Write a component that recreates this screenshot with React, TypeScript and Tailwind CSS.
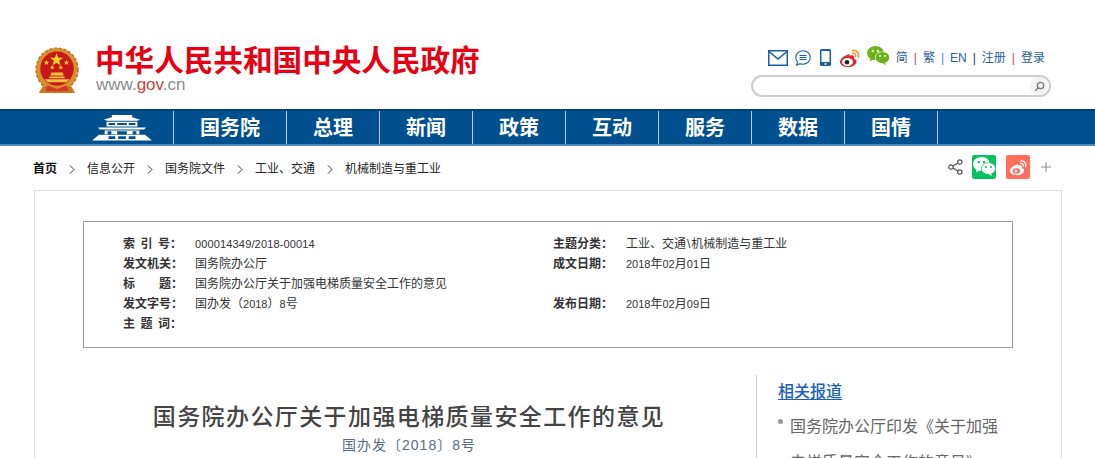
const cjk = { sans: "font-['Liberation_Sans','Noto_Sans_CJK_SC',sans-serif]" };

const navItems = [
  { label: '国务院', w: 'w-[113px]' },
  { label: '总理', w: 'w-[93px]' },
  { label: '新闻', w: 'w-[93px]' },
  { label: '政策', w: 'w-[93px]' },
  { label: '互动', w: 'w-[93px]' },
  { label: '服务', w: 'w-[93px]' },
  { label: '数据', w: 'w-[93px]' },
  { label: '国情', w: 'w-[93px]' },
];

const crumbs = ['信息公开', '国务院文件', '工业、交通', '机械制造与重工业'];

function Emblem() {
  return (
    <svg width="44" height="47" viewBox="0 0 46 48" preserveAspectRatio="none" className="shrink-0">
      <path d="M8 40 L4 47 H42 L38 40 Z" fill="#c9791c" />
      <circle cx="23" cy="23" r="22" fill="#d9912a" />
      <circle cx="23" cy="23" r="22" fill="none" stroke="#b5601a" strokeWidth="1.2" strokeDasharray="3 2" />
      <circle cx="23" cy="22" r="17.500" fill="#c8161d" />
      <polygon points="22.5,6 24.2,11 29.5,11 25.2,14 26.8,19 22.5,16 18.2,19 19.8,14 15.5,11 20.8,11" fill="#f7d51d" />
      <polygon points="12,13 12.8,15 15,15 13.2,16.4 13.9,18.5 12,17.2 10.1,18.5 10.8,16.4 9,15 11.2,15" fill="#f7d51d" />
      <polygon points="33,13 33.8,15 36,15 34.2,16.4 34.9,18.5 33,17.2 31.1,18.5 31.8,16.4 30,15 32.2,15" fill="#f7d51d" />
      <polygon points="18,18.5 18.7,20.2 20.5,20.2 19,21.4 19.6,23 18,22 16.4,23 17,21.4 15.5,20.2 17.3,20.2" fill="#f7d51d" />
      <polygon points="27,18.5 27.7,20.2 29.5,20.2 28,21.4 28.6,23 27,22 25.4,23 26,21.4 24.5,20.2 26.3,20.2" fill="#f7d51d" />
      <path d="M17 26 H29 L30 29 H16 Z M15 30 H31 V32 H15 Z" fill="#f5c63a" />
      <path d="M10 33 H36 L33 36 H13 Z" fill="#f0c040" />
      <path d="M13 39 L23 43 L33 39 L35 45 H11 Z" fill="#d5382a" />
    </svg>
  );
}

function Building() {
  return (
    <svg width="62" height="26" viewBox="0 0 62 27" fill="#fff" className="shrink-0">
      <path d="M20 0 H42 L41 2 L50 5 L46 6 H16 L12 5 L21 2 Z" />
      <path d="M15 7 H47 V12 H15 Z M17 8.2 V10.5 H24 V8.2 Z M26 8.2 V10.5 H36 V8.2 Z M38 8.2 V10.5 H45 V8.2 Z" fillRule="evenodd" />
      <path d="M6 13 H56 L54 15 H8 Z" />
      <path d="M13 16 H49 V20 H13 Z M16 17 V20 H20 V17 Z M26 17 V20 H36 V17 Z M42 17 V20 H46 V17 Z" fillRule="evenodd" />
      <path d="M7 20.5 H55 L62 26.5 H0 Z" />
      <path d="M17 22 H24 V25 H17 Z M27 22 H35 V25 H27 Z M38 22 H45 V25 H38 Z" fill="#00508f" />
    </svg>
  );
}

function WeiboColor() {
  return (
    <svg width="22" height="20" viewBox="0 0 22 20" className="shrink-0">
      <path d="M9 6.5 C3.500 8.500 .5 12 1 14.500 C1.800 18 6.500 19.500 10.500 19 C15 18.500 18 15.500 17.500 13 C17.200 11.500 15.500 11.300 15 10.800 C15.800 8.500 14.800 7.300 13.200 7.300 C12 7.300 10.500 8 10.500 8 C10.800 6 10.200 5.800 9 6.500 Z" fill="#e0272d" />
      <ellipse cx="8.500" cy="14" rx="5.500" ry="4" fill="#fff" />
      <circle cx="8" cy="14.200" r="2.300" fill="#222" />
      <path d="M13.500 2.500 C17.500 1.500 20.500 5 19.300 9" fill="none" stroke="#f59a23" strokeWidth="1.800" strokeLinecap="round" />
      <path d="M13.800 5.300 C15.800 4.900 17.200 6.500 16.600 8.300" fill="none" stroke="#f59a23" strokeWidth="1.500" strokeLinecap="round" />
    </svg>
  );
}

function WechatBubbles({ back, front, eye }: { back: string; front: string; eye: string }) {
  return (
    <svg width="23" height="20" viewBox="0 0 23 20" className="shrink-0">
      <ellipse cx="8.500" cy="7" rx="8.500" ry="7" fill={back} />
      <path d="M3.500 11 L3 15.500 L8 12.500 Z" fill={back} />
      <circle cx="5.800" cy="5" r="1.200" fill={eye} />
      <circle cx="11" cy="5" r="1.200" fill={eye} />
      <ellipse cx="15.500" cy="11.500" rx="7.500" ry="6" fill={eye} />
      <ellipse cx="15.500" cy="11.500" rx="6.800" ry="5.500" fill={front} />
      <path d="M17.500 15.500 L19 19.500 L14.500 16 Z" fill={front} />
      <circle cx="13" cy="10" r="1" fill={eye} />
      <circle cx="18" cy="10" r="1" fill={eye} />
    </svg>
  );
}

function TopLinks() {
  return (
    <div className="flex items-center text-[12px] leading-[16px] text-[#2a5c94]">
      <span>简</span>
      <span className="mx-[6px] text-[#b04a4a]">|</span>
      <span>繁</span>
      <span className="mx-[6px] text-[#3d8fc8]">|</span>
      <span>EN</span>
      <span className="mx-[6px] text-[#1b3a7a]">|</span>
      <span>注册</span>
      <span className="mx-[6px] text-[#b04a4a]">|</span>
      <span>登录</span>
    </div>
  );
}

function Header() {
  return (
    <header className="flex h-[109px] justify-between pl-[35px] pr-[44px]">
      <div className="flex pt-[47px]">
        <Emblem />
        <div className="ml-[16px] -mt-[4px]">
          <div className="text-[29.6px] font-bold leading-[36px] text-[#e60012]">中华人民共和国中央人民政府</div>
          <div className="-mt-[3px] pl-[1px] text-[17px] leading-[18px] text-[#8c8c8c]">
            www.<span className="text-[#c8453a]">gov</span>.cn
          </div>
        </div>
      </div>
      <div className="flex w-[300px] flex-col items-end pt-[48px]">
        <div className="mr-[6px] flex h-[19px] items-center justify-end">
          <svg width="20" height="16" viewBox="0 0 20 16" fill="none" stroke="#19609f" strokeWidth="1.500" className="shrink-0">
            <rect x=".75" y=".75" width="18.500" height="14.500" />
            <path d="M1 1.500 L10 9 L19 1.500" />
          </svg>
          <svg width="16" height="16" viewBox="0 0 16 16" fill="none" stroke="#19609f" strokeWidth="1.100" className="ml-[7px] shrink-0">
            <path d="M8 .8 C12 .8 15.200 3.600 15.200 7.500 C15.200 11.300 12 14.200 8 14.200 C7 14.200 6 14 5 13.700 L1.500 15 L2.500 12 C1.300 10.800 .8 9.200 .8 7.500 C.8 3.600 4 .8 8 .8 Z" />
            <path d="M4.500 5.500 H11.500 M4.500 7.500 H11.500 M4.500 9.500 H11.500" />
          </svg>
          <svg width="11" height="17" viewBox="0 0 11 17" className="ml-[9px] shrink-0">
            <rect x="0" y="0" width="11" height="17" rx="1.500" fill="#19609f" />
            <rect x="1.500" y="2" width="8" height="11" fill="#fff" />
            <circle cx="5.500" cy="15" r="1" fill="#fff" />
          </svg>
          <span className="ml-[8px]"><WeiboColor /></span>
          <span className="ml-[6px] -mt-[3px]"><WechatBubbles back="#6cb319" front="#6cb319" eye="#fff" /></span>
          <span className="ml-[6px]"><TopLinks /></span>
        </div>
        <div className="mt-[8px] flex h-[22px] w-[300px] items-center justify-end rounded-full border-2 border-[#cccccc] bg-white pr-[1px]">
          <div className="flex h-[18px] w-[18px] items-center justify-center rounded-full bg-[#f2f2f2]">
            <svg width="11" height="11" viewBox="0 0 11 11" fill="none" stroke="#777" strokeWidth="1.300">
              <circle cx="6.500" cy="4.500" r="3.200" />
              <path d="M4.200 6.800 L1.200 9.800" />
            </svg>
          </div>
        </div>
      </div>
    </header>
  );
}

function Nav() {
  return (
    <nav className="flex h-[37px] border-t-2 border-b-2 border-t-[#003f75] border-b-[#4f87b7] bg-[#00508f] pl-[91px]">
      <div className="flex w-[82px] items-center"><Building /></div>
      <div className="flex border-r border-[#b9cbdc]">
        {navItems.map(item => (
          <a
            key={item.label}
            className={`${item.w} flex items-center justify-center border-l border-[#b9cbdc] text-[20px] font-bold text-white`}
          >
            {item.label}
          </a>
        ))}
      </div>
    </nav>
  );
}

function Chevron() {
  return (
    <svg width="6" height="9" viewBox="0 0 6 9" fill="none" stroke="#333" strokeWidth="1" className="mx-[12px] shrink-0">
      <path d="M1 .5 L5 4.500 L1 8.500" />
    </svg>
  );
}

function Breadcrumb() {
  return (
    <div className="flex h-[44px] items-center justify-between pl-[33px] pr-[44px]">
      <div className="mt-[2px] flex items-center text-[12px] text-[#222]">
        <a className="font-bold text-[#111]">首页</a>
        {crumbs.map(c => (
          <span key={c} className="flex items-center">
            <Chevron />
            <a>{c}</a>
          </span>
        ))}
      </div>
      <div className="-mt-[2px] flex items-center">
        <svg width="15" height="16" viewBox="0 0 15 16" fill="none" stroke="#555" strokeWidth="1.200" className="shrink-0">
          <circle cx="11.800" cy="3" r="2.200" />
          <circle cx="3" cy="8" r="2.200" />
          <circle cx="11.800" cy="13" r="2.200" />
          <path d="M5 7 L9.800 4 M5 9 L9.800 12" />
        </svg>
        <div className="ml-[9px] flex h-[24px] w-[24px] items-center justify-center rounded-[2px] bg-[#07c160]">
          <WechatBubbles back="#ffffff" front="#ffffff" eye="#07c160" />
        </div>
        <div className="ml-[10px] flex h-[24px] w-[24px] items-center justify-center rounded-[2px] bg-[#ff6f5b]">
          <svg width="19" height="17" viewBox="0 0 22 20">
            <path d="M9 6.500 C3.500 8.500 .5 12 1 14.500 C1.800 18 6.500 19.500 10.500 19 C15 18.500 18 15.500 17.500 13 C17.200 11.500 15.500 11.300 15 10.800 C15.800 8.500 14.800 7.300 13.200 7.300 C12 7.300 10.500 8 10.500 8 C10.800 6 10.200 5.800 9 6.500 Z" fill="#fff" />
            <ellipse cx="8.500" cy="14" rx="4.500" ry="3.200" fill="#ff6f5b" />
            <circle cx="8" cy="14.200" r="1.600" fill="#fff" />
            <path d="M13.500 2.500 C17.500 1.500 20.500 5 19.300 9 M13.800 5.300 C15.800 4.900 17.200 6.500 16.600 8.300" fill="none" stroke="#fff" strokeWidth="1.500" strokeLinecap="round" />
          </svg>
        </div>
        <svg width="10" height="10" viewBox="0 0 10 10" stroke="#888" strokeWidth="1" className="ml-[11px] shrink-0">
          <path d="M5 0 V10 M0 5 H10" />
        </svg>
      </div>
    </div>
  );
}

// digits run about 6px wide in the picture, 11px Liberation Sans is the nearest
function Num({ children }: { children: string }) {
  return <span className="text-[11px] leading-none">{children}</span>;
}

function MetaLabel({ children }: { children: string }) {
  return <span className="w-[72px] shrink-0 whitespace-pre font-bold text-[#333] [word-spacing:2.2px]">{children}</span>;
}

function MetaBox() {
  return (
    <div className="ml-[48px] h-[127px] w-[930px] border border-[#999] pl-[39px] pt-[12px] text-[12px] leading-[20px] text-[#333]">
      <div className="flex">
        <div className="w-[430px]">
          <div className="flex h-[20px]"><MetaLabel>{'索 引 号：'}</MetaLabel><span className="text-[11px] tracking-[0.15px]">000014349/2018-00014</span></div>
          <div className="flex h-[20px]"><MetaLabel>发文机关：</MetaLabel><span>国务院办公厅</span></div>
          <div className="flex h-[20px]"><MetaLabel>{'标　　题：'}</MetaLabel><span>国务院办公厅关于加强电梯质量安全工作的意见</span></div>
          <div className="flex h-[20px]"><MetaLabel>发文字号：</MetaLabel><span>国办发（<Num>2018</Num>）<Num>8</Num>号</span></div>
          <div className="flex h-[20px]"><MetaLabel>{'主 题 词：'}</MetaLabel></div>
        </div>
        <div className="flex-1">
          <div className="flex h-[20px]"><span className="w-[73px] shrink-0 font-bold">主题分类：</span><span>工业、交通<span className="mx-[1px]">\</span>机械制造与重工业</span></div>
          <div className="flex h-[20px]"><span className="w-[73px] shrink-0 font-bold">成文日期：</span><span><Num>2018</Num>年<Num>02</Num>月<Num>01</Num>日</span></div>
          <div className="h-[20px]" />
          <div className="flex h-[20px]"><span className="w-[73px] shrink-0 font-bold">发布日期：</span><span><Num>2018</Num>年<Num>02</Num>月<Num>09</Num>日</span></div>
        </div>
      </div>
    </div>
  );
}

export default function App() {
  return (
    <div className={`h-[458px] w-[1095px] overflow-hidden bg-white ${cjk.sans}`}>
      <Header />
      <Nav />
      <Breadcrumb />
      <main className="ml-[34px] w-[1028px] border border-[#e0e0e0] pt-[30px]">
        <MetaBox />
        <div className="mt-[27px] flex">
          <article className="w-[721px] pl-[27px] pt-[27px] text-center">
            <h1 className="text-[23px] font-medium leading-[30px] tracking-[1.4px] text-[#444]">国务院办公厅关于加强电梯质量安全工作的意见</h1>
            <p className="mt-[3px] text-[14px] leading-[20px] tracking-[1px] text-[#5b6a82]">国办发〔2018〕8号</p>
          </article>
          <aside className="h-[200px] flex-1 border-l border-[#cccccc] pl-[21px] pt-[6px]">
            <h2 className="w-fit text-[16px] font-medium leading-[22px] text-[#1a5fc0] underline underline-offset-2">相关报道</h2>
            <div className="relative mt-[6px] w-[220px] pl-[12px] text-[16px] leading-[36px] text-[#666]">
              <span className="absolute left-0 top-[10px] h-[5px] w-[5px] rounded-full bg-[#999]" />
              国务院办公厅印发《关于加强电梯质量安全工作的意见》
            </div>
          </aside>
        </div>
      </main>
    </div>
  );
}
